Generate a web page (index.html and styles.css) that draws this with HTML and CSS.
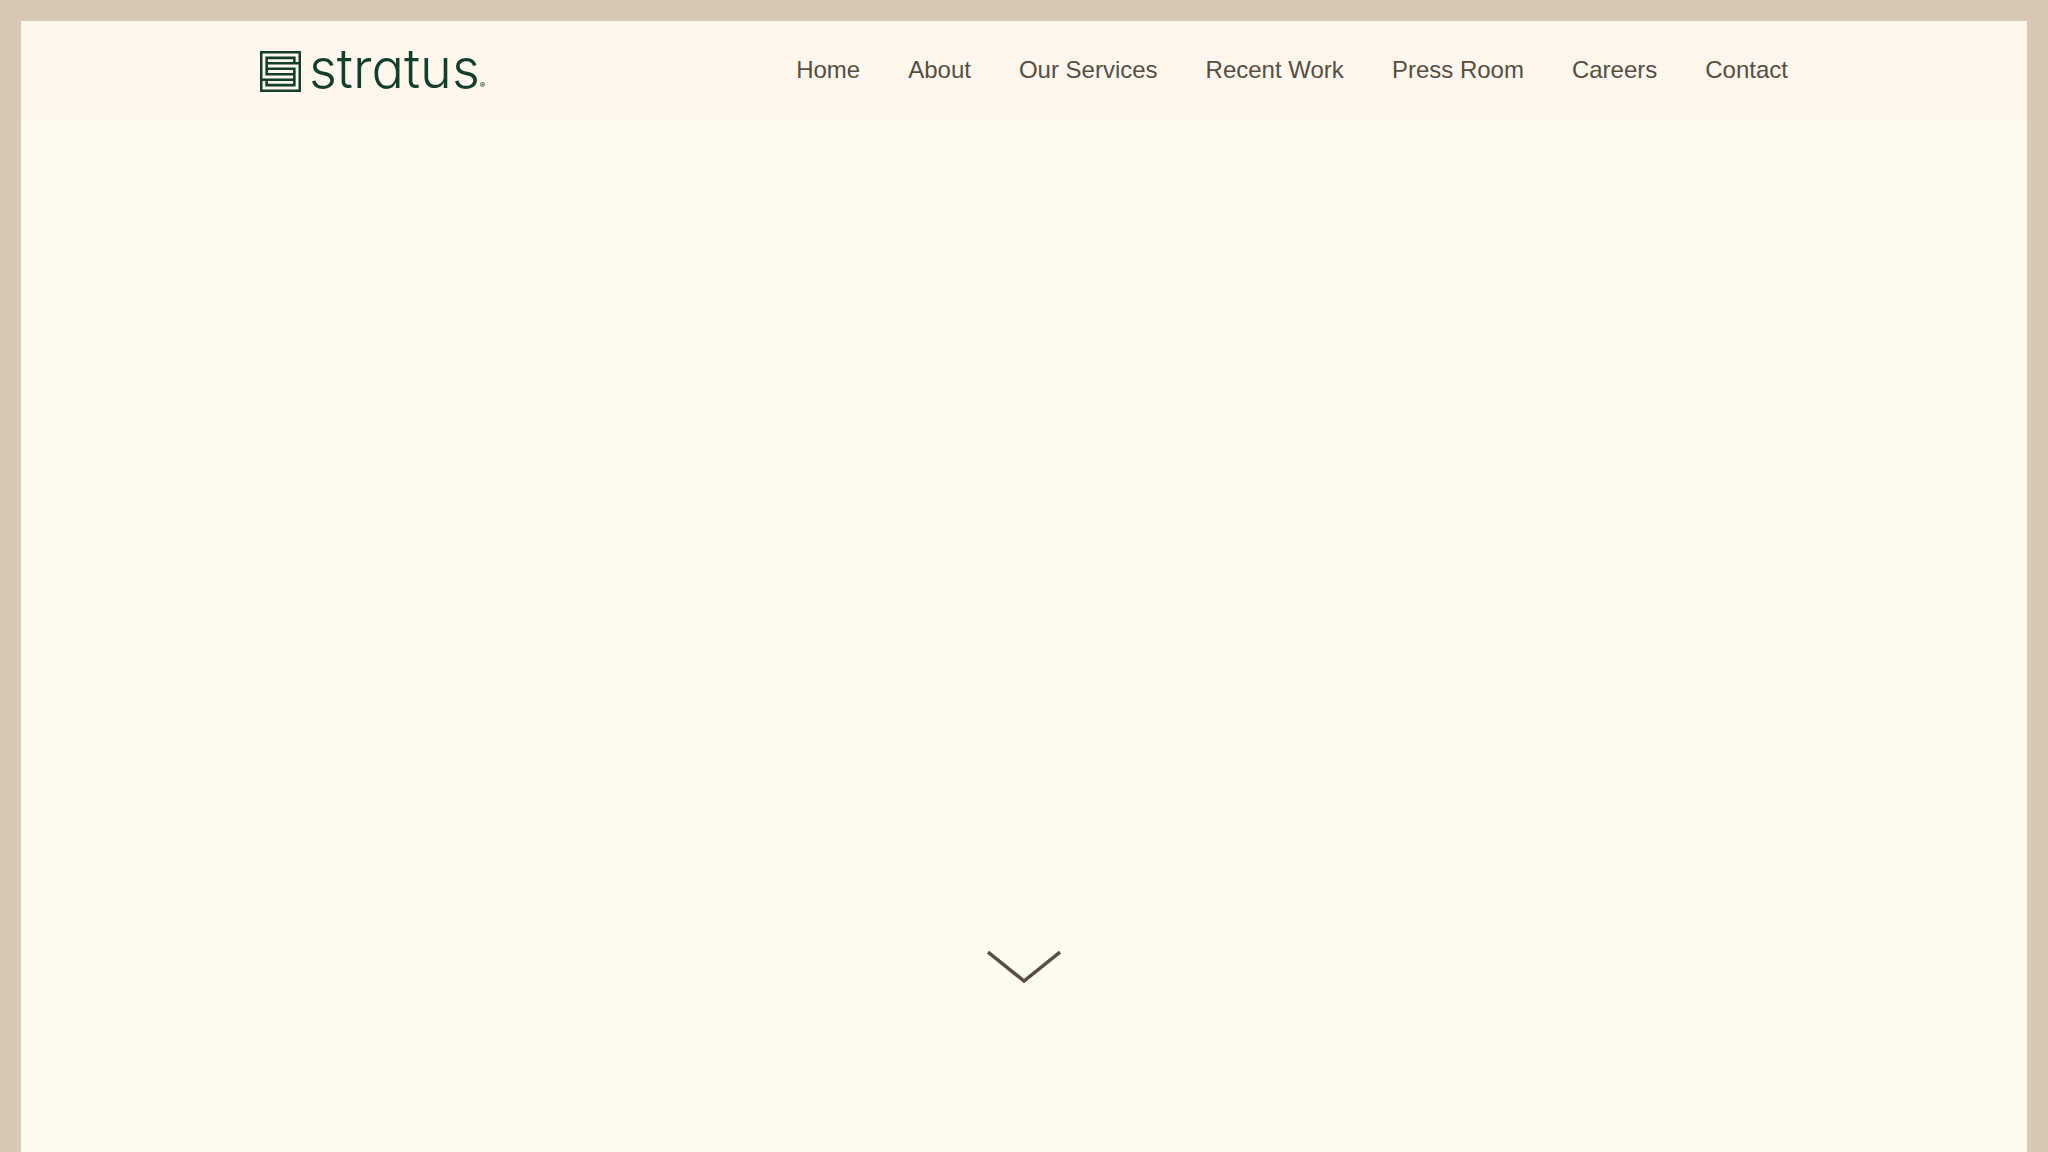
FILE: index.html
```
<!DOCTYPE html>
<html lang="en">
<head>
  <meta charset="UTF-8" />
  <meta name="viewport" content="width=device-width, initial-scale=1.0" />
  <title>Stratus</title>
  <link rel="stylesheet" href="styles.css">
</head>
<body>
  <header class="site-header">
    <div class="container">
      <a class="logo" href="#">
        <svg class="logo-mark" viewBox="0 0 40 40" fill="none" stroke="#123f27" stroke-width="2.5" aria-hidden="true">
          <path d="M1.2 1.2H38.8V38.8H1.2Z" />
          <path d="M38.8 12H6.5M33.5 12V6.7H6.5V22.7H33.5" />
          <path d="M1.2 28H33.5M6.5 28V33.3H33.5V17.3H6.5" />
        </svg>
        <span class="logo-text">stratus</span><span class="logo-reg">®</span>
      </a>
      <nav class="main-nav">
        <a href="#">Home</a>
        <a href="#">About</a>
        <a href="#">Our Services</a>
        <a href="#">Recent Work</a>
        <a href="#">Press Room</a>
        <a href="#">Careers</a>
        <a href="#">Contact</a>
      </nav>
    </div>
  </header>

  <main class="hero">
    <a class="scroll-down" href="#" aria-label="Scroll down">
      <svg viewBox="0 0 74 34" fill="none" stroke="#544e43" stroke-width="3.5">
        <path d="M1 2L37 31L73 2" />
      </svg>
    </a>
  </main>
</body>
</html>
```

FILE: styles.css
```
* {
  box-sizing: border-box;
}
body {
  margin: 0;
  min-height: 100vh;
  display: flex;
  flex-direction: column;
  border: 21px solid #d8c9b4;
  border-bottom: none;
  background: #fffaee;
  color: #544e43;
  font-family: "Liberation Sans", Arial, sans-serif;
}
a {
  color: inherit;
  text-decoration: none;
}

/* header */
.site-header {
  background: #fff7ee;
}
.container {
  max-width: 1528px;
  height: 100px;
  margin: 0 auto;
  display: flex;
  align-items: center;
  justify-content: space-between;
}
.logo {
  display: flex;
  align-items: center;
  color: #123f27;
  font-family: Inter, sans-serif;
}
.logo-mark {
  width: 41px;
  height: 41px;
  margin-right: 8px;
}
.logo-text {
  padding-bottom: 4px;
  font-size: 54px;
  font-weight: 300;
  line-height: 56px;
  font-feature-settings: "cv11";
}
.logo-reg {
  align-self: flex-end;
  font-size: 8px;
  font-weight: 600;
  line-height: 32px;
}
.main-nav {
  display: flex;
  gap: 48px;
  padding-bottom: 2px;
  font-size: 24px;
  line-height: 28px;
}
.main-nav a:hover {
  text-decoration: underline;
}

/* hero */
.hero {
  flex: 1;
  display: flex;
  align-items: flex-end;
  justify-content: center;
  padding-bottom: 168px;
}
.scroll-down svg {
  display: block;
  width: 74px;
  height: 34px;
}
```
